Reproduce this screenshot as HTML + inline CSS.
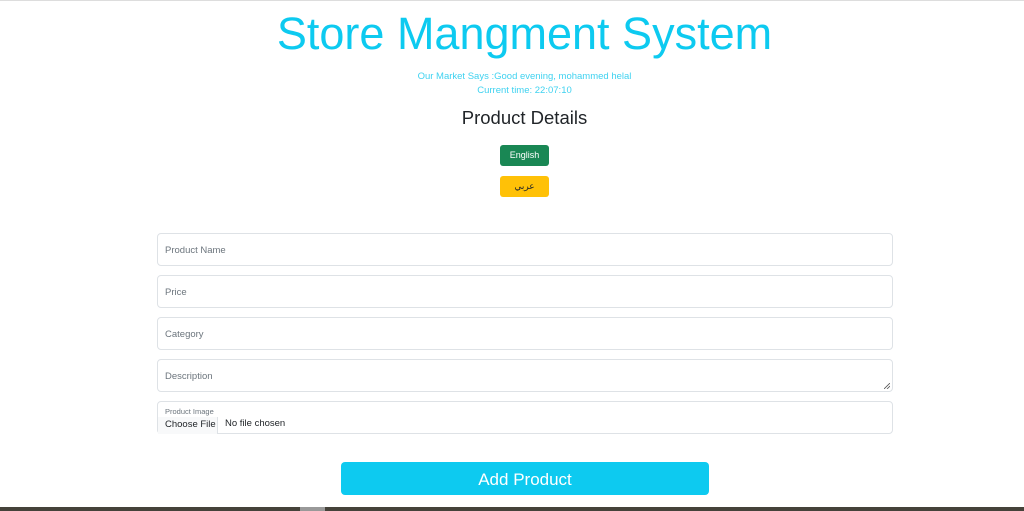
<!DOCTYPE html>
<html><head><meta charset="utf-8"><style>
body{margin:0;width:1024px;height:511px;overflow:hidden;background:#fff;font-family:"Liberation Sans",sans-serif;position:relative}
.topline{position:absolute;top:0;left:0;right:0;height:1px;background:#ddd}
h1{position:absolute;top:8px;left:0;width:1049px;text-align:center;margin:0;font-size:45px;font-weight:normal;color:#0dcaf0;letter-spacing:0}
.sub{position:absolute;left:0;width:1049px;text-align:center;font-size:9.5px;color:#3fd2f0}
h2{position:absolute;top:107px;left:0;width:1049px;text-align:center;margin:0;font-size:18.5px;font-weight:normal;color:#212529}
.btn{position:absolute;left:500px;width:49px;height:21px;border-radius:3px;font-size:9px;text-align:center;line-height:21px}
.inp{position:absolute;left:157px;width:736px;height:33px;border:1px solid #dee2e6;border-radius:4px;font-size:9.5px;color:#6c757d;line-height:33px;padding-left:7px;box-sizing:border-box}
.add{position:absolute;left:341px;top:462px;width:368px;height:33px;background:#0dcaf0;border-radius:4px;color:#fff;font-size:17px;text-align:center;line-height:35px}
.bottom{position:absolute;left:0;right:0;top:507px;height:4px;background:#45423a}
</style></head><body>
<div class="topline"></div>
<h1>Store Mangment System</h1>
<div class="sub" style="top:71px">Our Market Says :Good evening, mohammed helal</div>
<div class="sub" style="top:85px">Current time: 22:07:10</div>
<h2>Product Details</h2>
<div class="btn" style="top:145px;background:#198754;color:#fff">English</div>
<div class="btn" style="top:176px;background:#ffc107;color:#212529">عربي</div>
<div class="inp" style="top:233px">Product Name</div>
<div class="inp" style="top:275px">Price</div>
<div class="inp" style="top:317px">Category</div>
<div class="inp" style="top:359px">Description<svg style="position:absolute;right:2px;bottom:2px" width="6" height="6"><path d="M0 6L6 0M3 6L6 3" stroke="#555" stroke-width="0.8"/></svg></div>
<div class="inp" style="top:401px;line-height:normal;padding:0">
<div style="position:absolute;left:7px;top:5px;font-size:7.5px;color:#6c757d">Product Image</div>
<div style="position:absolute;left:0;top:15px;width:60px;height:17px;background:#f8f9fa;border-right:1px solid #dee2e6;font-size:9.5px;color:#212529;line-height:15px;padding-left:7px;box-sizing:border-box">Choose File</div>
<div style="position:absolute;left:67px;top:16px;font-size:9.5px;color:#212529">No file chosen</div>
</div>
<div class="add">Add Product</div>
<div class="bottom"></div>
<div style="position:absolute;left:300px;top:507px;width:25px;height:4px;background:#999"></div>
</body></html>
